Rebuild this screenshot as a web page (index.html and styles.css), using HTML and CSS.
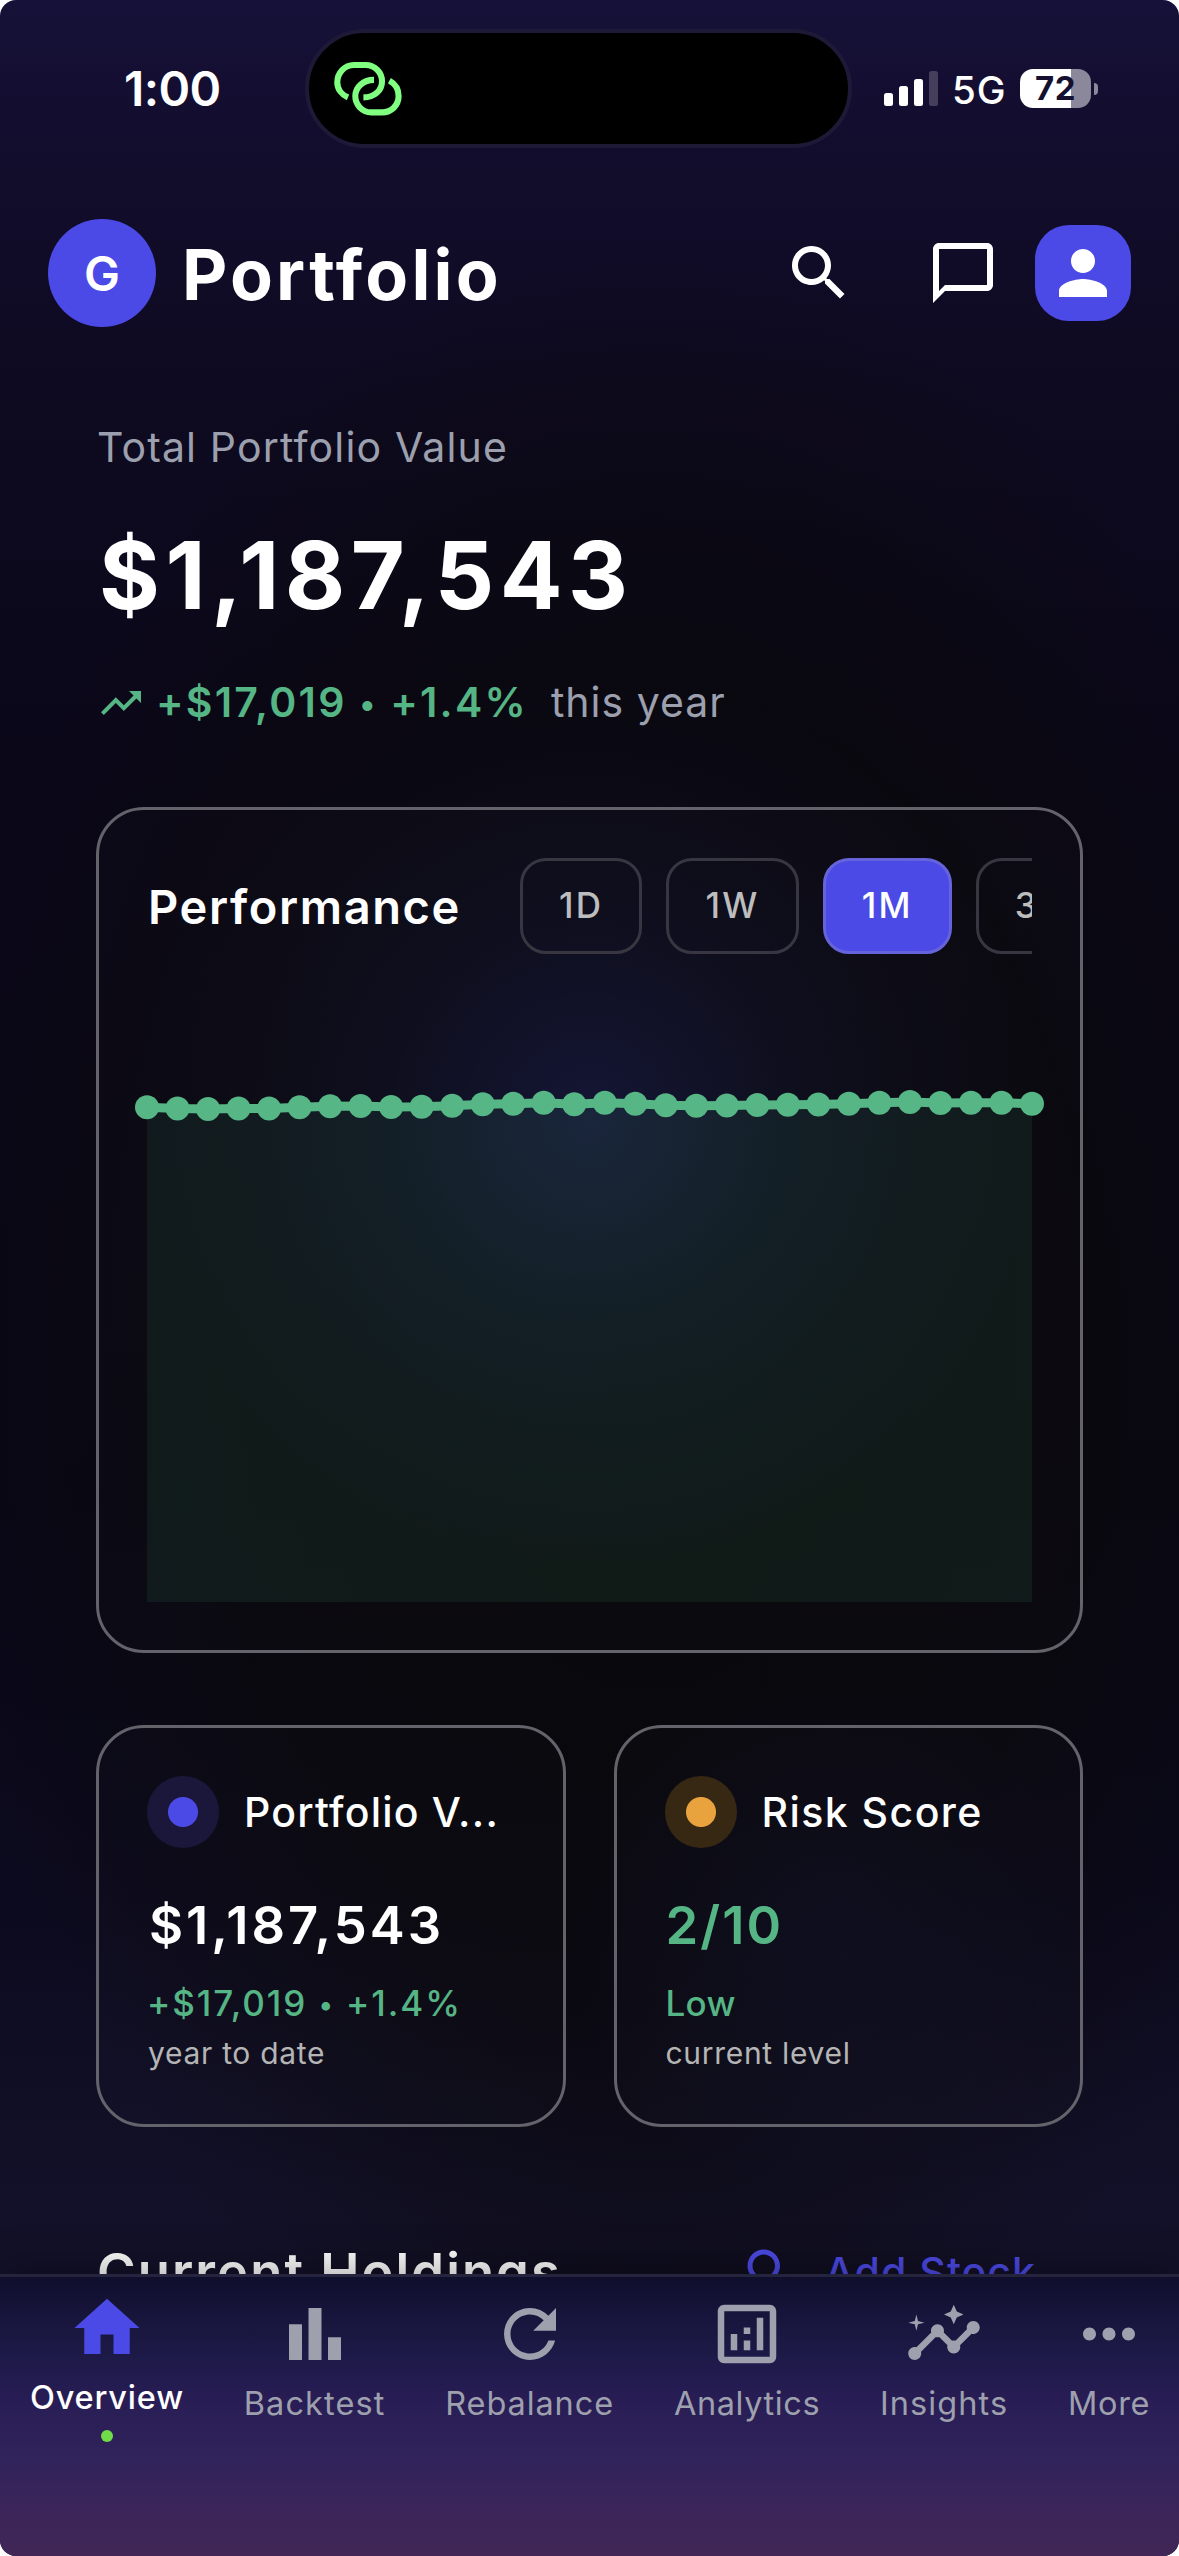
FILE: index.html
```html
<!DOCTYPE html>
<html lang="en">
<head>
<meta charset="utf-8">
<title>Portfolio</title>
<link rel="stylesheet" href="styles.css">
</head>
<body>
<div class="screen">
  <div class="status">
    <span class="status-time">1:00</span>
    <div class="island">
      <svg class="link-icon" viewBox="0 0 72 58" fill="none" stroke="#80ff80" stroke-width="6.1">
        <path d="M15 37.4C8.5 34.6 4.3 28.9 4.3 22.4 4.3 12.8 11.6 5 21 5H32.6C42 5 49 12.6 49 21.4 49 30.4 41.4 37.4 30.4 37.4"/>
        <path d="M41 19.9C30.4 19.9 22.3 27 22.3 36.1 22.3 45 29.4 52.4 38.4 52.4H49C58.4 52.4 65.6 45.4 65.6 36.1 65.6 29.4 62.2 23.8 56.4 20.6"/>
      </svg>
    </div>
    <div class="status-right">
      <div class="signal"><i class="bar b1"></i><i class="bar b2"></i><i class="bar b3"></i><i class="bar b4"></i></div>
      <span class="network">5G</span>
      <div class="battery">72</div>
      <i class="battery-cap"></i>
    </div>
  </div>

  <header class="header">
    <div class="avatar">G</div>
    <h1 class="title">Portfolio</h1>
    <svg class="head-icon" viewBox="0 0 24 24"><path d="M15.5 14h-.79l-.28-.27C15.41 12.59 16 11.11 16 9.5 16 5.91 13.09 3 9.5 3S3 5.91 3 9.5 5.91 16 9.5 16c1.61 0 3.09-.59 4.23-1.57l.27.28v.79l5 4.99L20.49 19l-4.99-5zm-6 0C7.01 14 5 11.99 5 9.5S7.01 5 9.5 5 14 7.01 14 9.5 11.99 14 9.5 14z"/></svg>
    <svg class="head-icon chat" viewBox="0 0 24 24"><path d="M20 2H4c-1.1 0-2 .9-2 2v18l4-4h14c1.1 0 2-.9 2-2V4c0-1.1-.9-2-2-2zm0 14H6l-2 2V4h16v12z"/></svg>
    <div class="profile">
      <svg class="head-icon" viewBox="0 0 24 24"><path d="M12 12c2.21 0 4-1.79 4-4s-1.79-4-4-4-4 1.79-4 4 1.79 4 4 4zm0 2c-2.67 0-8 1.34-8 4v2h16v-2c0-2.66-5.33-4-8-4z"/></svg>
    </div>
  </header>

  <main class="content">
    <section class="hero">
      <div class="hero-label">Total Portfolio Value</div>
      <div class="hero-value">$1,187,543</div>
      <div class="hero-change">
        <svg class="trend" viewBox="0 0 24 24"><path d="M16 6l2.29 2.29-4.88 4.88-4-4L2 16.59 3.41 18l6-6 4 4 6.3-6.29L22 12V6z"/></svg>
        <span class="gain">+$17,019 <small class="bullet">•</small> +1.4%</span>
        <span class="period">this year</span>
      </div>
    </section>

    <section class="card performance">
      <div class="performance-head">
        <h2 class="card-title">Performance</h2>
        <div class="chips">
          <span class="chip">1D</span><span class="chip">1W</span><span class="chip active">1M</span><span class="chip">3M</span>
        </div>
      </div>
      <svg class="chart" viewBox="0 0 885 600" id="chart">
        <path class="chart-area" id="area"/>
        <polyline class="chart-line" id="line"/>
        <g class="chart-dots" id="dots"></g>
      </svg>
    </section>

    <section class="stats">
      <div class="card stat">
        <div class="stat-head"><i class="dot indigo"></i><span class="stat-label clipped">Portfolio V...</span></div>
        <div class="stat-value">$1,187,543</div>
        <div class="stat-change">+$17,019 <small class="bullet">•</small> +1.4%</div>
        <div class="stat-note">year to date</div>
      </div>
      <div class="card stat">
        <div class="stat-head"><i class="dot amber"></i><span class="stat-label">Risk Score</span></div>
        <div class="stat-value green">2/10</div>
        <div class="stat-change low">Low</div>
        <div class="stat-note">current level</div>
      </div>
    </section>

    <section class="holdings">
      <h2 class="holdings-title">Current Holdings</h2>
      <div class="add-stock">
        <svg class="add-icon" viewBox="0 0 24 24"><path d="M15.5 14h-.79l-.28-.27C15.41 12.59 16 11.11 16 9.5 16 5.91 13.09 3 9.5 3S3 5.91 3 9.5 5.91 16 9.5 16c1.61 0 3.09-.59 4.23-1.57l.27.28v.79l5 4.99L20.49 19l-4.99-5zm-6 0C7.01 14 5 11.99 5 9.5S7.01 5 9.5 5 14 7.01 14 9.5 11.99 14 9.5 14z"/></svg>
        <span>Add Stock</span>
      </div>
    </section>
  </main>

  <nav class="nav">
    <div class="nav-item current">
      <svg class="nav-icon" viewBox="0 0 24 24"><path d="M10 20v-6h4v6h5v-8h3L12 3 2 12h3v8z"/></svg>
      <span>Overview</span><i class="nav-dot"></i>
    </div>
    <div class="nav-item">
      <svg class="nav-icon" viewBox="0 0 24 24"><path d="M4 9h4v11H4zM16 13h4v7h-4zM10 4h4v16h-4z"/></svg>
      <span class="wide">Backtest</span>
    </div>
    <div class="nav-item">
      <svg class="nav-icon" viewBox="0 0 24 24"><path d="M17.65 6.35C16.2 4.9 14.21 4 12 4c-4.42 0-7.99 3.58-7.99 8s3.57 8 7.99 8c3.73 0 6.84-2.55 7.73-6h-2.08c-.82 2.33-3.04 4-5.65 4-3.31 0-6-2.69-6-6s2.69-6 6-6c1.66 0 3.14.69 4.22 1.78L13 11h7V4l-2.35 2.35z"/></svg>
      <span>Rebalance</span>
    </div>
    <div class="nav-item">
      <svg class="nav-icon" viewBox="0 0 24 24"><path d="M19 3H5c-1.1 0-2 .9-2 2v14c0 1.1.9 2 2 2h14c1.1 0 2-.9 2-2V5c0-1.1-.9-2-2-2zm0 16H5V5h14v14zM7 12h2v5H7zM15 7h2v10h-2zM11 14h2v3h-2zM11 10h2v2h-2z"/></svg>
      <span class="tight">Analytics</span>
    </div>
    <div class="nav-item">
      <svg class="nav-icon" viewBox="0 0 24 24"><path d="M21 8c-1.45 0-2.26 1.44-1.93 2.51l-3.55 3.56c-.3-.09-.74-.09-1.04 0l-2.55-2.55C12.27 10.45 11.46 9 10 9c-1.45 0-2.27 1.44-1.93 2.52l-4.56 4.55C2.44 15.74 1 16.55 1 18c0 1.1.9 2 2 2 1.45 0 2.26-1.44 1.93-2.51l4.55-4.56c.3.09.74.09 1.04 0l2.55 2.55C12.73 16.55 13.54 18 15 18c1.45 0 2.27-1.44 1.93-2.52l3.56-3.55C21.56 12.26 23 11.45 23 10c0-1.1-.9-2-2-2z"/><path d="M15 9l.94-2.07L18 6l-2.06-.93L15 3l-.92 2.07L12 6l2.08.93zM3.5 11L4 9l2-.5L4 8l-.5-2L3 8l-2 .5L3 9z"/></svg>
      <span class="wide">Insights</span>
    </div>
    <div class="nav-item">
      <svg class="nav-icon" viewBox="0 0 24 24"><path d="M6 10c-1.1 0-2 .9-2 2s.9 2 2 2 2-.9 2-2-.9-2-2-2zm12 0c-1.1 0-2 .9-2 2s.9 2 2 2 2-.9 2-2-.9-2-2-2zm-6 0c-1.1 0-2 .9-2 2s.9 2 2 2 2-.9 2-2-.9-2-2-2z"/></svg>
      <span class="tight">More</span>
    </div>
  </nav>
</div>
<script src="chart.js"></script>
</body>
</html>
```
FILE: chart.js
```js
// Vertical position of each daily value inside the 885x600 plot.
const values = [105.2, 106.5, 107, 106.5, 106.5, 105.3, 104.2, 104, 105, 104.8, 103.8, 102.3, 101.8, 100.8, 102.2,
  100.8, 101.8, 103.2, 103.7, 103.5, 103, 102.8, 102.5, 101.7, 100.7, 100, 101, 100.7, 100.8, 101.7];
const step = 885 / (values.length - 1);
const points = values.map((y, i) => [i * step, y]);
const list = points.map(p => p.join(",")).join(" ");
document.getElementById("line").setAttribute("points", list);
document.getElementById("area").setAttribute("d", "M0,600 L" + list + " L885,600Z");
const dots = document.getElementById("dots");
for (const [x, y] of points) {
  const c = document.createElementNS("http://www.w3.org/2000/svg", "circle");
  c.setAttribute("cx", x);
  c.setAttribute("cy", y);
  c.setAttribute("r", 12);
  dots.appendChild(c);
}
```
FILE: styles.css
```css
* { box-sizing: border-box; margin: 0; padding: 0; }
html { background: #fff; }
body { font-family: Inter, "Liberation Sans", sans-serif; color: #fff; white-space: nowrap; }

.screen {
  width: 1179px;
  height: 2556px;
  display: flex;
  flex-direction: column;
  overflow: hidden;
  border-radius: 16px;
  background:
    radial-gradient(circle 450px at 590px 1120px, rgba(50, 65, 190, .22), rgba(40, 55, 160, .1) 45%, rgba(40, 50, 160, 0)),
    radial-gradient(circle 260px at 830px 1940px, rgba(40, 50, 160, .09), rgba(40, 50, 160, 0)),
    radial-gradient(ellipse 720px 1100px at 650px 1350px, rgba(9, 8, 10, .95), rgba(9, 8, 10, .7) 60%, rgba(9, 8, 10, 0)),
    linear-gradient(180deg, #161138 0, #120d2c 160px, #0e0a20 400px, #0b0719 800px, #090716 1500px, #0c0a1e 1900px, #131129 2200px, #131128 2290px);
}

/* Status bar */
.status { display: grid; grid-template-columns: 305px 547px 1fr; align-items: center; height: 177px; flex: none; }
.status-time { padding-left: 124px; font-size: 48px; font-weight: 600; line-height: 60px; letter-spacing: -.6px; }
.island { height: 119px; border: 4px solid #1e1937; border-radius: 60px; background: #000; display: flex; align-items: center; padding-left: 24px; }
.link-icon { width: 72px; height: 58px; }
.status-right { display: flex; align-items: center; padding-left: 32px; }
.signal { display: flex; align-items: flex-end; gap: 6px; height: 35px; }
.bar { width: 9px; border-radius: 2.5px; background: #fff; }
.b1 { height: 13px; }
.b2 { height: 20px; }
.b3 { height: 27px; }
.b4 { height: 35px; background: #453f5b; }
.network { margin-left: 14px; width: 68px; font-size: 38.5px; font-weight: 500; letter-spacing: 1px; line-height: 48px; padding-top: 2px; }
.battery { width: 71px; height: 39px; border-radius: 13px; background: linear-gradient(90deg, #fff 51px, #8c889b 51px); color: #15102f; font-size: 33px; font-weight: 700; line-height: 39px; letter-spacing: .5px; padding-left: 15px; }
.battery-cap { width: 4px; height: 12px; margin-left: 3px; border-radius: 0 4px 4px 0; background: #8c889b; }

/* Header */
.header { display: flex; align-items: center; height: 192px; padding: 0 48px; flex: none; }
.avatar { width: 108px; height: 108px; border-radius: 50%; background: #4c4ae6; text-align: center; font-size: 48px; font-weight: 600; line-height: 110px; }
.title { margin: 3px auto 0 26px; font-size: 70px; font-weight: 700; line-height: 84px; letter-spacing: 3.2px; }
.head-icon { width: 72px; height: 72px; fill: #fff; display: block; }
.chat { margin: 0 36px 0 72px; }
.profile { width: 96px; height: 96px; border-radius: 34px; background: #4c4ae6; padding: 12px; }

/* Scrolling content */
.content { flex: 1; min-height: 0; overflow: hidden; padding: 48px 96px 0; }
.hero { padding-left: 1px; margin-bottom: 75px; }
.hero-label { font-size: 41px; line-height: 60px; letter-spacing: 1.15px; color: #9ca0ae; }
.hero-value { margin-top: 42px; padding-left: 2px; font-size: 93px; font-weight: 700; line-height: 112px; letter-spacing: 5.5px; }
.hero-change { display: flex; align-items: center; height: 60px; margin-top: 41px; font-size: 41px; line-height: 60px; }
.trend { width: 48px; height: 48px; margin: 2px 11px 0 0; fill: #56b585; }
.gain { color: #56b585; font-weight: 600; letter-spacing: 2.25px; }
.bullet { font-size: .78em; line-height: 0; vertical-align: 2px; }
.period { margin-left: 23px; color: #9ca0ae; letter-spacing: 1px; }

.card { border: 3px solid #64626a; border-radius: 48px; background: rgba(255, 255, 230, .013); padding: 48px; }
.performance { height: 846px; }
.performance-head { display: flex; align-items: center; height: 96px; }
.card-title { width: 373px; flex: none; padding: 2px 0 0 1px; font-size: 47px; font-weight: 600; line-height: 60px; letter-spacing: 1.6px; }
.chips { display: flex; flex: 1; min-width: 0; gap: 24px; overflow: hidden; }
.chip { flex: none; height: 96px; padding: 0 36px; border: 3px solid #373641; border-radius: 26px; font-size: 35px; font-weight: 450; line-height: 89px; letter-spacing: 2.3px; color: #bdbdbd; }
.chip.active { background: #4c4ae6; border-color: #6664da; color: #fff; font-weight: 500; }
.chart { display: block; width: 885px; height: 600px; margin-top: 48px; overflow: visible; }
.chart-area { fill: rgba(70, 190, 125, .095); }
.chart-line { fill: none; stroke: #56b685; stroke-width: 9; }
.chart-dots { fill: #56b685; }

.stats { display: grid; grid-template-columns: 1fr 1fr; gap: 48px; margin-top: 72px; }
.stat { height: 402px; }
.stat-head { display: flex; align-items: center; gap: 25px; height: 72px; }
.dot { width: 72px; height: 72px; border-radius: 50%; flex: none; }
.indigo { background: radial-gradient(circle, #4c4ae6 14.5px, #1a173b 15.5px); }
.amber { background: radial-gradient(circle, #e8a33e 14.5px, #372814 15.5px); }
.stat-label { font-size: 41px; font-weight: 450; line-height: 54px; letter-spacing: 1.45px; }
.clipped { letter-spacing: 1.2px; }
.stat-value { margin-top: 45px; padding-left: 2px; font-size: 52.5px; font-weight: 600; line-height: 64px; letter-spacing: 2.95px; }
.green { padding-left: 1px; color: #56b585; letter-spacing: 2.1px; }
.stat-change { height: 44px; margin-top: 24px; font-size: 35px; font-weight: 450; line-height: 44px; letter-spacing: 1.9px; color: #56b585; }
.low { padding-left: 1px; letter-spacing: .3px; }
.stat-note { margin-top: 10px; padding-left: 1px; font-size: 30px; line-height: 36px; letter-spacing: .7px; color: #b5b5b5; }

.holdings { display: flex; align-items: center; justify-content: space-between; margin-top: 113px; height: 64px; padding-left: 1px; }
.holdings-title { font-size: 52.5px; font-weight: 600; line-height: 64px; letter-spacing: 2.06px; }
.add-stock { display: flex; align-items: center; gap: 25px; margin-right: 47px; font-size: 41px; font-weight: 450; line-height: 60px; letter-spacing: 1.05px; color: #4c4ae6; }
.add-icon { width: 60px; height: 60px; fill: #4c4ae6; }

/* Bottom navigation */
.nav {
  position: relative;
  display: flex;
  justify-content: space-between;
  flex: none;
  height: 282px;
  padding: 18px 29px 0 30px;
  border-top: 3px solid #25243f;
  background: linear-gradient(180deg, #0f0e2d 0, #19173f 50px, #1e1a4a 85px, #271d54 120px, #32235b 190px, #3c2559 235px, #412657 279px);
  box-shadow: 0 -8px 36px rgba(0, 0, 0, .3);
}
.nav-item { display: flex; flex-direction: column; align-items: center; color: #9ea0ae; font-size: 32.5px; line-height: 42px; letter-spacing: .9px; }
.nav-icon { width: 78px; height: 78px; margin: 0 -10px 10px; fill: #9ea0ae; }
.nav-item .wide { letter-spacing: 1.08px; }
.nav-item .tight { letter-spacing: .6px; }
.current { margin-top: -6px; color: #fff; font-weight: 450; letter-spacing: .8px; }
.current .nav-icon { fill: #4c4ae6; }
.nav-dot { width: 12px; height: 12px; margin-top: 11px; border-radius: 50%; background: #70dc48; }
```
